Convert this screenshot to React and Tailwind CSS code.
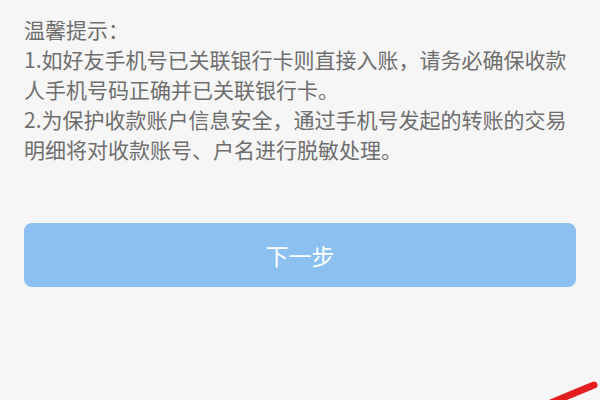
import React from "react";

export default function App() {
    return (
        <div
            className="relative w-[600px] h-[400px] overflow-hidden bg-[#f6f6f6]"
            style={{ fontFamily: "'Noto Sans CJK SC', 'Noto Sans', sans-serif" }}
        >
            <div className="px-[24px] pt-[14px] text-[21px] leading-[30px] text-[#6e6e6e]">
                <p>温馨提示：</p>
                <p>1.如好友手机号已关联银行卡则直接入账，请务必确保收款人手机号码正确并已关联银行卡。</p>
                <p>2.为保护收款账户信息安全，通过手机号发起的转账的交易明细将对收款账号、户名进行脱敏处理。</p>
            </div>
            <div className="px-[24px] mt-[59px]">
                <button className="w-full h-[64px] rounded-[8px] bg-[#8bc0f1] text-white text-[23px] flex items-center justify-center">
                    下一步
                </button>
            </div>
            <svg className="absolute left-0 top-0" width="600" height="400" viewBox="0 0 600 400">
                <path d="M546 405 Q572 394 594 385" stroke="#e41e1e" strokeWidth="7" strokeLinecap="round" fill="none" />
            </svg>
        </div>
    );
}
